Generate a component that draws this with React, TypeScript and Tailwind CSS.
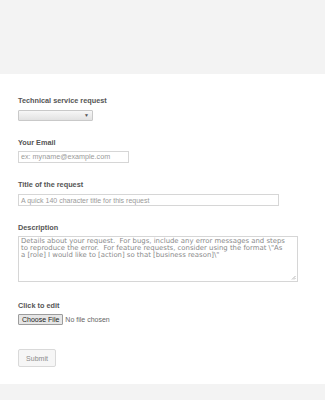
const labelCls =
  "block font-bold text-[7.3px] leading-[10px] text-[#555] [font-family:'Liberation_Sans',Arial,sans-serif]";

export default function App() {
  return (
    <div className="w-[325px] h-[400px] bg-white flex flex-col [font-family:'Liberation_Sans',Arial,sans-serif]">
      <div className="h-[74px] bg-[#f3f3f3]" />
      <div className="flex-1 px-[18px] pt-[22px]">
        {/* select */}
        <label className={labelCls}>Technical service request</label>
        <div className="mt-[4px] w-[75px] h-[11px] border border-[#c9c9c9] rounded-[1px] bg-gradient-to-b from-[#f7f7f7] to-[#e2e2e2] flex items-center justify-end pr-[3px]">
          <span className="text-[5px] leading-none text-[#555]">▼</span>
        </div>

        {/* email */}
        <label className={labelCls + " mt-[17px]"}>Your Email</label>
        <div className="mt-[3px] w-[111px] h-[12px] border border-[#d6d6d6] flex items-center px-[2px]">
          <span className="text-[7.2px] leading-none text-[#9a9a9a]">ex: myname@example.com</span>
        </div>

        {/* title */}
        <label className={labelCls + " mt-[17px]"}>Title of the request</label>
        <div className="mt-[4px] w-[261px] h-[12px] border border-[#d6d6d6] flex items-center px-[2px]">
          <span className="text-[7px] leading-none text-[#9a9a9a]">A quick 140 character title for this request</span>
        </div>

        {/* description */}
        <label className={labelCls + " mt-[17px]"}>Description</label>
        <div className="relative mt-[3px] w-[280px] h-[46px] border border-[#d6d6d6] px-[2px] pt-[1px]">
          <p className="text-[6.9px] leading-[7px] text-[#8a8a8a] [font-family:'DejaVu_Sans',Verdana,sans-serif] whitespace-nowrap">
            Details about your request.&nbsp; For bugs, include any error messages and steps
            <br />
            to reproduce the error.&nbsp; For feature requests, consider using the format \"As
            <br />
            a [role] I would like to [action] so that [business reason]\"
          </p>
          <svg className="absolute right-[1px] bottom-[1px]" width="5" height="5" viewBox="0 0 5 5">
            <path d="M4.5 1 L1 4.5 M4.5 3 L3 4.5" stroke="#9a9a9a" strokeWidth="0.7" />
          </svg>
        </div>

        {/* file */}
        <label className={labelCls + " mt-[19px]"}>Click to edit</label>
        <div className="mt-[3px] flex items-center gap-[2px]">
          <div className="h-[11px] px-[3px] border border-[#9c9c9c] rounded-[1px] bg-[#e6e6e6] flex items-center">
            <span className="text-[7px] leading-none text-[#222]">Choose File</span>
          </div>
          <span className="text-[7px] leading-none text-[#666]">No file chosen</span>
        </div>

        {/* submit */}
        <div className="mt-[24px] w-[38px] h-[18px] border border-[#d9d9d9] rounded-[2px] bg-[#f6f6f6] flex items-center justify-center">
          <span className="text-[7px] leading-none text-[#8a8a8a]">Submit</span>
        </div>
      </div>
      <div className="h-[16px] bg-[#f3f3f3]" />
    </div>
  );
}
